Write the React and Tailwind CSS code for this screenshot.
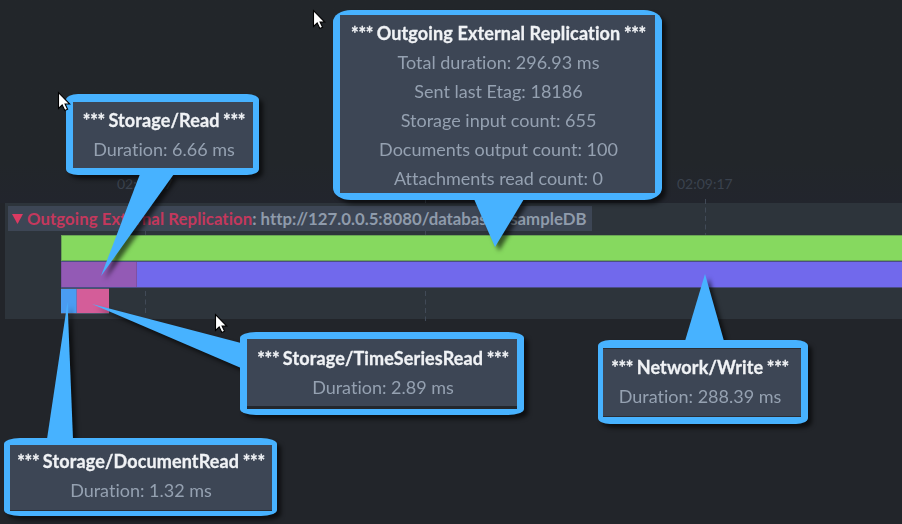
const callouts = [
  {
    title: 'Outgoing External Replication',
    lines: [
      'Total duration: 296.93 ms',
      'Sent last Etag: 18186',
      'Storage input count: 655',
      'Documents output count: 100',
      'Attachments read count: 0',
    ],
    frame: 'left-[333px] top-[10px] w-[329px] h-[190px] pl-[7px] pr-[7px] pt-[5px] pb-[7px] rounded-[18px/12px]',
    body: 'pt-[4px] pl-[2px]',
    pointer: '474,199 524,199 495,247',
  },
  {
    title: 'Storage/Read',
    lines: ['Duration: 6.66 ms'],
    frame: 'left-[66px] top-[94px] w-[193px] h-[81px] pl-[7px] pr-[6px] pt-[8px] pb-[7px] rounded-[12px/6px]',
    body: 'pt-[4px] pl-[2px]',
    pointer: '140,174 174,174 101,276',
  },
  {
    title: 'Storage/TimeSeriesRead',
    lines: ['Duration: 2.89 ms'],
    frame: 'left-[240px] top-[332px] w-[284px] h-[83px] px-[7px] pt-[7px] pb-[6px] rounded-[16px/6px]',
    body: 'pt-[5px] pl-[2px] border-b-[3px] border-[#23262b]',
    pointer: '241,343 241,368 92,304',
  },
  {
    title: 'Network/Write',
    lines: ['Duration: 288.39 ms'],
    frame: 'left-[598px] top-[340px] w-[210px] h-[84px] pl-[5px] pr-[7px] pt-[8px] pb-[7px] rounded-[12px/6px]',
    body: 'pt-[4px] pr-[4px] border-y border-[#2a2e35]',
    pointer: '685,341 724,341 705,274',
  },
  {
    title: 'Storage/DocumentRead',
    lines: ['Duration: 1.32 ms'],
    frame: 'left-[4px] top-[438px] w-[273px] h-[78px] pl-[6px] pr-[5px] pt-[7px] pb-[5px] rounded-[16px/6px]',
    body: 'pt-[2px] border-b border-[#2a2e35]',
    pointer: '47,439 73,439 67.5,302',
  },
]

const cursors = ['left-[312px] top-[9px]', 'left-[57px] top-[91px]', 'left-[214px] top-[313px]']

function Callout({ title, lines, frame, body, pointer }) {
  return (
    <div className="absolute inset-0 drop-shadow-[4px_4px_2px_rgba(0,0,0,0.6)]">
      <svg className="absolute inset-0" width="902" height="524">
        <polygon points={pointer} fill="#47b2ff" />
      </svg>
      <div className={`absolute bg-[#47b2ff] ${frame}`}>
        <div className={`flex h-full flex-col items-center bg-[#3d4655] text-center text-[18px] leading-[29px] whitespace-nowrap text-[#95a1b1] ${body}`}>
          <p className="flex gap-[3.5px] font-bold text-[#f0f2f5] [-webkit-text-stroke:0.3px_#f0f2f5]">
            <span className="tracking-[-0.3px]">***</span>
            <span className="tracking-[0.14px]">{title}</span>
            <span className="tracking-[-0.3px]">***</span>
          </p>
          {lines.map((line) => (
            <p key={line}>{line}</p>
          ))}
        </div>
      </div>
    </div>
  )
}

function Cursor({ place }) {
  return (
    <svg className={`absolute ${place}`} width="14" height="21" viewBox="0 0 14 21">
      <path d="M1.5 1.5v16l3.7-3.5 2.6 5.5 2.8-1.3-2.5-5.2h4.7z" fill="#fff" stroke="#000" strokeWidth="1.1" />
    </svg>
  )
}

function GridLine({ x, y1, y2 }) {
  return <line x1={x} x2={x} y1={y1} y2={y2} stroke="#414a57" strokeWidth="1" strokeDasharray="5 3.5" />
}

export default function App() {
  return (
    <main className="relative h-[524px] w-[902px] overflow-hidden bg-[#22252a] font-['Lato',sans-serif] [font-variant-ligatures:none]">
      <header className="flex h-[203px] items-end bg-linear-to-b from-[#22262a] from-80% to-[#22252d] pb-[10px] pl-[117px] text-[14px] leading-[18px] text-[#3a424e]">
        <span className="w-[560px]">02:09:17</span>
        <span>02:09:17</span>
      </header>
      <section className="ml-[5px] flex h-[116px] flex-col bg-[#2d343b] pt-[3px]">
        <h1 className="ml-[3px] flex h-[25px] w-[584px] items-center bg-[#3d4655] pl-[4px] text-[16.8px] leading-[25px] font-bold whitespace-nowrap text-[#8f9bab]">
          <svg className="mr-[4px]" width="11" height="10">
            <path d="M0 0h11L5.5 10z" fill="#db3a62" />
          </svg>
          <span className="tracking-[0.06px] text-[#c4385d]">Outgoing External Replication</span>
          <span>: http://127.0.0.5:8080/databases/sampleDB</span>
        </h1>
        <div className="mt-[4px] ml-[56px] h-[26px] border border-r-0 border-[#6aa554] bg-[#86d95f]" />
        <div className="ml-[56px] flex h-[27px] border-y border-[#4a4d86]">
          <div className="w-[76px] border-x border-[#7f50a4] bg-[#935ab5]" />
          <div className="flex-1 bg-[#7169ec]" />
        </div>
        <div className="ml-[56px] flex h-[26px] w-[48px] border-y border-[#4b5569]">
          <div className="w-[16px] border-r border-[#6a76be] bg-[#4a9cf2]" />
          <div className="w-[32px] bg-[#d45d99]" />
        </div>
      </section>
      <svg className="absolute inset-0" width="902" height="524">
        <GridLine x={145.5} y1={198} y2={206} />
        <GridLine x={145.5} y1={231} y2={235} />
        <GridLine x={145.5} y1={291} y2={315} />
        <GridLine x={425.5} y1={198} y2={206} />
        <GridLine x={425.5} y1={231} y2={235} />
        <GridLine x={425.5} y1={291} y2={321} />
        <GridLine x={705.5} y1={199} y2={235} />
        <GridLine x={705.5} y1={291} y2={319} />
      </svg>
      {callouts.map((callout) => (
        <Callout key={callout.title} {...callout} />
      ))}
      {cursors.map((place) => (
        <Cursor key={place} place={place} />
      ))}
    </main>
  )
}
